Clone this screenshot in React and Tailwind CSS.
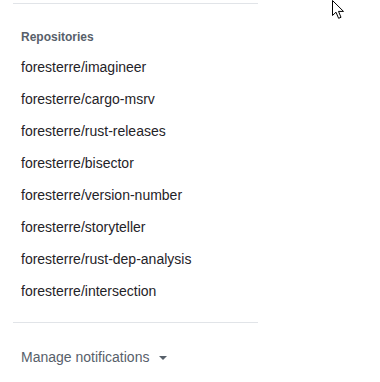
import React from "react";

const repos = [
  "foresterre/imagineer",
  "foresterre/cargo-msrv",
  "foresterre/rust-releases",
  "foresterre/bisector",
  "foresterre/version-number",
  "foresterre/storyteller",
  "foresterre/rust-dep-analysis",
  "foresterre/intersection",
];

export default function App() {
  return (
    <div
      className="relative w-[380px] h-[382px] bg-white overflow-hidden"
      style={{ fontFamily: '"Liberation Sans", Arial, sans-serif' }}
    >
      <div className="ml-[13px] w-[245px] pt-[3px]">
        <div className="border-t border-[#e1e4e8]" />
        <div className="px-2 pt-[24px] pb-[15px]">
          <div className="text-[12px] font-semibold text-[#57606a] leading-[18px] mb-[5px]">
            Repositories
          </div>
          <ul>
            {repos.map((r) => (
              <li key={r} className="h-[32px] flex items-center text-[14px] text-[#1f2328]">
                {r}
              </li>
            ))}
          </ul>
        </div>
        <div className="border-t border-[#e1e4e8]" />
        <div className="px-2 pt-[24px] flex items-center gap-[10px] text-[14px] text-[#57606a]">
          <span>Manage notifications</span>
          <svg width="8" height="4" viewBox="0 0 8 4" className="mt-[1px]">
            <path d="M0 0h8L4 4z" fill="#57606a" />
          </svg>
        </div>
      </div>
      <svg
        className="absolute left-[332px] top-0"
        width="14"
        height="20"
        viewBox="0 0 14 20"
      >
        <path
          d="M0.5 0.5V15.5L4 12.2L6.6 18.3L9 17.3L6.5 11.4H11.5Z"
          fill="#fff"
          stroke="#000"
          strokeWidth="1"
          strokeLinejoin="round"
        />
      </svg>
    </div>
  );
}
